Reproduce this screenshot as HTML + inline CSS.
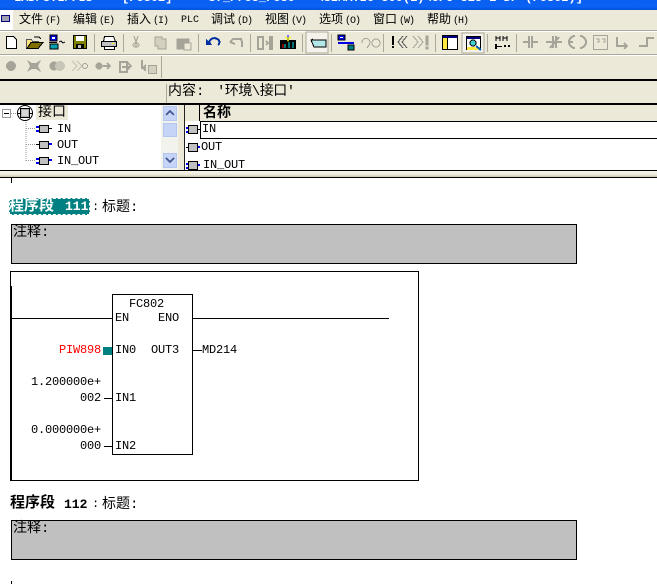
<!DOCTYPE html>
<html><head><meta charset="utf-8">
<style>
html,body{margin:0;padding:0;width:657px;height:584px;overflow:hidden;background:#fff}
#p{position:relative;width:657px;height:584px;overflow:hidden;font:12px/14px "Liberation Mono","WenQuanYi Zen Hei","Noto Sans CJK SC",monospace;color:#000}
.t{position:absolute;white-space:pre;line-height:14px;letter-spacing:-.2px}
.b{position:absolute;box-sizing:border-box}
.bd{font-weight:bold}
.c{font-size:14px;letter-spacing:0}
.n{font-size:13px;font-weight:bold;letter-spacing:0}
.mn{letter-spacing:0;top:13px}
.mn span{font-size:10px;margin-left:2px;letter-spacing:-1px}
svg{position:absolute;left:0;top:0}
</style></head><body><div id="p">
<div class="b" style="left:0;top:0;width:657px;height:10px;background:linear-gradient(#0a5ff0,#0a62f4 70%,#0050d8);overflow:hidden">
<div class="t bd" style="left:14px;top:-9px;color:#fff;letter-spacing:0">LAD/STL/FBD  - [FC802]     S7_Pro3_FC80   \SIMATIC 300(1)\CPU 315-2 DP (FC802)]</div>
</div>
<div class="b" style="left:0;top:10px;width:657px;height:70px;background:#ece9d8"></div>
<div class="b" style="left:0;top:79px;width:657px;height:2px;background:#000"></div>
<div class="b" style="left:0;top:81px;width:657px;height:23px;background:#ece9d8"></div>
<div class="b" style="left:0;top:10px;width:13px;height:20px;background:#fff"></div>
<div class="b" style="left:1px;top:15px;width:9px;height:7px;background:#a0a0b0;border:1px solid #000080"></div>

<div class="t mn" style="left:19px">文件<span>(F)</span></div>
<div class="t mn" style="left:73px">编辑<span>(E)</span></div>
<div class="t mn" style="left:127px">插入<span>(I)</span></div>
<div class="t" style="left:181px;top:14px;font-size:10px;letter-spacing:0">PLC</div>
<div class="t mn" style="left:211px">调试<span>(D)</span></div>
<div class="t mn" style="left:265px">视图<span>(V)</span></div>
<div class="t mn" style="left:319px">选项<span>(O)</span></div>
<div class="t mn" style="left:373px">窗口<span>(W)</span></div>
<div class="t mn" style="left:427px">帮助<span>(H)</span></div>

<div class="b" style="left:0;top:30px;width:657px;height:1px;background:#aca899"></div>
<div class="b" style="left:0;top:31px;width:657px;height:1px;background:#fff"></div>
<div class="b" style="left:0;top:54px;width:657px;height:1px;background:#aca899"></div>
<div class="b" style="left:0;top:55px;width:657px;height:1px;background:#fff"></div>

<svg width="657" height="584" viewBox="0 0 657 584" shape-rendering="crispEdges">
<g fill="#aca899">
<rect x="94" y="34" width="1" height="18"/><rect x="123" y="34" width="1" height="18"/><rect x="198" y="34" width="1" height="18"/><rect x="250" y="34" width="1" height="18"/><rect x="302" y="34" width="1" height="18"/><rect x="331" y="34" width="1" height="18"/><rect x="383" y="34" width="1" height="18"/><rect x="435" y="34" width="1" height="18"/><rect x="487" y="34" width="1" height="18"/><rect x="516" y="34" width="1" height="18"/><rect x="161" y="56" width="1" height="22"/>
</g>
<path d="M6.5 36.5h7l3 3v9h-10z" fill="#fff" stroke="#000"/>
<path d="M26.5 39.5h5l1 2h6v7h-12z" fill="#ffe680" stroke="#555"/><path d="M27 48.5l4-6h12l-5 6z" fill="#807000" stroke="#000"/><path d="M34 37h5l2 2" fill="none" stroke="#000"/>
<rect x="50" y="35" width="7" height="6" fill="#0000e0" stroke="#000"/><rect x="52" y="37" width="3" height="2" fill="#fff"/><rect x="49" y="42" width="8" height="1" fill="#000"/><rect x="50" y="44" width="8" height="5" fill="#00a0b0" stroke="#000"/><path d="M59 42l2-1 2 2 2-1" fill="none" stroke="#000"/>
<rect x="73.500" y="35.500" width="13" height="13" fill="#808000" stroke="#000"/><rect x="76" y="36" width="8" height="5" fill="#fff"/><rect x="76" y="44" width="8" height="5" fill="#000"/><rect x="78" y="45" width="3" height="3" fill="#c0c0c0"/>
<path d="M104.500 36.500h9l2 5h-12z" fill="#fff" stroke="#000"/><rect x="101.500" y="41.500" width="15" height="5" fill="#c0c0c0" stroke="#000"/><rect x="104.500" y="46.500" width="10" height="3" fill="#fff" stroke="#000"/><rect x="112" y="43" width="2" height="1" fill="#ff0"/>
<g fill="#a6a498" stroke="#a6a498">
<path d="M134 36l2 6 2-6M135 43a2 2 0 1 0 .1 0M137 43a2 2 0 1 0 .1 0" fill="none"/>
<path d="M155 37h7v2h4v10h-8v-3h-3z" fill="#d4d0c0"/>
<path d="M177 39h12v10h-12z" fill="#a6a498"/><rect x="184" y="43" width="7" height="7" fill="#ece9d8"/>
<path d="M230 42l3-3h8l1 3v5M230 42l5 2" fill="none" stroke-width="2"/>
<path d="M258 37h5v12h-5zM266 41l2 2-2 2M270 37h2v5h-2zM270 44h2v5h-2z" fill="none" stroke-width="2"/>
<path d="M362 43a4 4 0 1 1 7 2l-2 3M372 43a4 4 0 1 1 0 .1" fill="none"/>
<path d="M413 36l5 6-5 6M418 36l5 6-5 6" fill="none"/><rect x="426" y="36" width="2" height="9"/><rect x="426" y="47" width="2" height="2"/>
<path d="M523 42h5M533 42h5M529 36v12M532 36v12" fill="none" stroke-width="2"/>
<path d="M546 42h6M557 42h5M553 36v12M556 36v12M550 48l9-11" fill="none" stroke-width="2"/>
<path d="M569 42h4M575 36a6 6 0 0 0 0 12M580 36a6 6 0 0 1 0 12" fill="none" stroke-width="2"/>
<rect x="593.500" y="35.500" width="14" height="14" fill="none"/><path d="M596 39h3v3h-2M602 39h3v3h-2" fill="none"/>
<path d="M617 37v9h10M624 43l3 3-3 3" fill="none" stroke-width="2"/>
<path d="M639 46h8v-8h7M647 38" fill="none" stroke-width="2"/>
</g>
<path d="M210 44a5 4 0 1 1 8 1" fill="none" stroke="#0030a0" stroke-width="2"/><path d="M206 39v6h6z" fill="#0030a0"/>
<rect x="280" y="40" width="16" height="9" fill="#000"/><path d="M285 44v4M289 42v6M293 42v6" stroke="#00e0e0"/><path d="M283 44v4" stroke="#f00"/><path d="M288 35v6" stroke="#00f"/><path d="M285 38h6M286 37l2 4 2-4" stroke="#ff0" fill="none"/>
<rect x="306" y="32" width="22" height="21" fill="#f4f2ea" stroke="#aca899"/><path d="M311 40h15v7h-12z" fill="#b4e8e8" stroke="#000"/><path d="M311 40l2-1" stroke="#000"/>
<rect x="338" y="35" width="7" height="5" fill="#0000e0" stroke="#000"/><rect x="340" y="37" width="3" height="1" fill="#fff"/><rect x="338" y="42" width="16" height="2" fill="#0000e0"/><rect x="348" y="45" width="6" height="5" fill="#008080" stroke="#000"/>
<rect x="392" y="36" width="2" height="9" fill="#000"/><rect x="392" y="46" width="2" height="2" fill="#000"/><path d="M403 36l-5 6 5 6M407 36l-5 6 5 6" fill="none" stroke="#555"/>
<rect x="442.500" y="35.500" width="15" height="14" fill="#fff" stroke="#000"/><rect x="443" y="36" width="14" height="2" fill="#000080"/><rect x="443" y="38" width="4" height="11" fill="#ffe840"/><rect x="447" y="38" width="1" height="11" fill="#000"/>
<rect x="462" y="33" width="22" height="20" fill="#f4f2ea" stroke="#aca899"/><rect x="466.500" y="36.500" width="14" height="13" fill="#fff" stroke="#000"/><rect x="467" y="37" width="13" height="2" fill="#000080"/><rect x="467" y="47" width="13" height="3" fill="#ffe840"/><circle cx="473" cy="43" r="3" fill="#40d0d0" stroke="#000"/><path d="M476 46l5 4" stroke="#0060c0" stroke-width="2"/>
<path d="M496 36v5M500 36v5M496 38h4M503 36v5M507 36v5M503 38h4" stroke="#000" fill="none"/><rect x="495" y="44" width="2" height="5" fill="#000"/><rect x="497" y="46" width="5" height="1" fill="#000"/><rect x="504" y="45" width="2" height="2" fill="#000"/><rect x="508" y="45" width="2" height="2" fill="#000"/>
<g fill="#a6a498" stroke="none">
<circle cx="11" cy="66" r="5"/>
<path d="M27 60l5 3h4l5-3-3 6 3 6-5-3h-4l-5 3 3-6z"/>
<circle cx="54" cy="66" r="4.500"/><circle cx="60" cy="66" r="5" fill="#c8c6b8"/>
<path d="M72 61l5 5-5 5M77 61l5 5-5 5" fill="none" stroke="#c4c2b4"/><circle cx="85" cy="66" r="2.500" fill="none" stroke="#a6a498"/>
<circle cx="99" cy="66" r="3.500"/><path d="M103 66h7M107 63l3 3-3 3" fill="none" stroke="#a6a498" stroke-width="2"/>
<path d="M120 62h7v10h-7zM122 67h8M127 62l4 4-4 4" fill="none" stroke="#a6a498" stroke-width="2"/>
<path d="M142 60v8h4M146 65l-3 3 3 3" fill="none" stroke="#a6a498" stroke-width="2"/><rect x="148.500" y="65.500" width="8" height="8" fill="#d4d0c0" stroke="#a6a498"/>
</g>
</svg>

<div class="t c" style="left:168px;top:85px">内容:</div>
<div class="t c" style="left:217px;top:85px;letter-spacing:-.5px">'环境\接口'</div>
<div class="b" style="left:166px;top:84px;width:1px;height:19px;background:#aca899"></div>
<div class="b" style="left:0;top:103px;width:657px;height:2px;background:#000"></div>

<div class="b" style="left:0;top:105px;width:161px;height:65px;background:#fff"></div>
<div class="b" style="left:36px;top:105px;width:32px;height:15px;background:#ece9d8"></div>
<div class="t c" style="left:38px;top:106px">接口</div>
<div class="t" style="left:57px;top:122px">IN</div>
<div class="t" style="left:57px;top:138px">OUT</div>
<div class="t" style="left:57px;top:154px">IN_OUT</div>
<svg width="657" height="584" viewBox="0 0 657 584" shape-rendering="crispEdges">
<rect x="2.500" y="109.500" width="8" height="8" fill="#fff" stroke="#999"/><path d="M4 113.500h5" stroke="#000"/>
<path d="M11 113.500h6M26 120v42M26 128.500h10M26 144.500h10M26 160.500h10" stroke="#999" stroke-dasharray="1 1" fill="none"/>
<circle cx="25" cy="113" r="7.500" fill="none" stroke="#000" shape-rendering="auto"/>
<path d="M17 113.500h3M29 113.500h4" stroke="#000"/>
<rect x="20.500" y="108.500" width="9" height="9" fill="#b0b0b0" stroke="#000"/><rect x="22" y="110" width="6" height="6" fill="#d8d8d8"/>
<rect x="36" y="126" width="3" height="2" fill="#00e"/><rect x="36" y="130" width="3" height="2" fill="#00e"/><rect x="39.500" y="125.500" width="9" height="7" fill="#c0c0c0" stroke="#000"/><path d="M49 128.500h3" stroke="#000"/>
<path d="M36 144.500h3" stroke="#000"/><rect x="39.500" y="141.500" width="9" height="7" fill="#c0c0c0" stroke="#000"/><rect x="49" y="143" width="3" height="2" fill="#00e"/>
<rect x="36" y="158" width="3" height="2" fill="#00e"/><rect x="36" y="162" width="3" height="2" fill="#00e"/><rect x="39.500" y="157.500" width="9" height="7" fill="#c0c0c0" stroke="#000"/><rect x="49" y="159" width="3" height="2" fill="#00e"/>
<rect x="161" y="105" width="17" height="65" fill="#f3f3ee"/>
<rect x="163.500" y="106.500" width="13" height="14" fill="#c6d4f7" stroke="#b4c6ee"/><path d="M166 115l4-4 4 4" fill="none" stroke="#45588f" stroke-width="2"/>
<rect x="163.500" y="123.500" width="13" height="13" fill="#c6d4f7" stroke="#b4c6ee"/>
<rect x="163.500" y="153.500" width="13" height="14" fill="#c6d4f7" stroke="#b4c6ee"/><path d="M166 158l4 4 4-4" fill="none" stroke="#45588f" stroke-width="2"/>
<rect x="178" y="105" width="6" height="65" fill="#ece9d8"/>
<rect x="184" y="105" width="1" height="65" fill="#222"/>
<rect x="185" y="105" width="472" height="65" fill="#fff"/>
<rect x="185" y="105" width="472" height="16" fill="#ece9d8"/>
<rect x="199" y="105" width="1" height="16" fill="#000"/>
<rect x="200" y="121" width="457" height="1" fill="#000"/>
<rect x="200" y="121" width="1" height="18" fill="#000"/>
<rect x="200" y="138" width="457" height="1" fill="#000"/>
<rect x="186" y="127" width="3" height="2" fill="#00e"/><rect x="186" y="131" width="3" height="2" fill="#00e"/><rect x="188.500" y="125.500" width="9" height="8" fill="#c0c0c0" stroke="#000"/><path d="M198 129.500h2" stroke="#000"/>
<path d="M186 147.500h3" stroke="#000"/><rect x="188.500" y="143.500" width="9" height="8" fill="#c0c0c0" stroke="#000"/><rect x="198" y="146" width="2" height="2" fill="#00e"/>
<rect x="186" y="163" width="3" height="2" fill="#00e"/><rect x="186" y="167" width="3" height="2" fill="#00e"/><rect x="188.500" y="161.500" width="9" height="8" fill="#c0c0c0" stroke="#000"/><rect x="198" y="164" width="2" height="2" fill="#00e"/>
</svg>
<div class="t bd c" style="left:203px;top:107px">名称</div>
<div class="t" style="left:202px;top:122px">IN</div>
<div class="t" style="left:201px;top:140px">OUT</div>
<div class="b" style="left:200px;top:158px;width:100px;height:12px;overflow:hidden"><div class="t" style="left:3px;top:0">IN_OUT</div></div>

<div class="b" style="left:0;top:170px;width:657px;height:1px;background:#000"></div>
<div class="b" style="left:0;top:171px;width:657px;height:6px;background:linear-gradient(#f6f4ea,#ece9d8 60%,#c8c4b0)"></div>
<div class="b" style="left:0;top:177px;width:657px;height:1px;background:#000"></div>
<div class="b" style="left:11px;top:178px;width:1px;height:5px;background:#000"></div>

<div class="b" style="left:9px;top:198px;width:81px;height:17px;background:#008080;outline:1px dashed #fff;outline-offset:-1px"></div>
<div class="t bd c" style="left:9px;top:200px;color:#fff;font-size:15px">程序段</div>
<div class="t n" style="left:65px;top:200px;color:#fff">111</div>
<div class="t" style="left:92px;top:200px">:</div>
<div class="t c" style="left:102px;top:201px">标题:</div>
<div class="b" style="left:11px;top:224px;width:566px;height:40px;background:#c0c0c0;border:1px solid #000"></div>
<div class="t c" style="left:13px;top:226px">注释:</div>

<div class="b" style="left:10px;top:271px;width:409px;height:210px;border:1px solid #000"></div>
<div class="b" style="left:10px;top:286px;width:2px;height:195px;background:#000"></div>
<div class="b" style="left:12px;top:318px;width:100px;height:1px;background:#000"></div>
<div class="b" style="left:193px;top:318px;width:196px;height:1px;background:#000"></div>
<div class="b" style="left:112px;top:294px;width:81px;height:161px;border:1px solid #000;background:#fff"></div>
<div class="t" style="left:129px;top:297px">FC802</div>
<div class="t" style="left:115px;top:311px">EN</div>
<div class="t" style="left:158px;top:311px">ENO</div>
<div class="t" style="left:115px;top:343px">IN0</div>
<div class="t" style="left:151px;top:343px">OUT3</div>
<div class="b" style="left:193px;top:350px;width:9px;height:1px;background:#000"></div>
<div class="t" style="left:202px;top:343px">MD214</div>
<div class="t" style="left:59px;top:343px;color:#f00">PIW898</div>
<div class="b" style="left:103px;top:347px;width:9px;height:8px;background:#008080"></div>
<div class="t" style="left:31px;top:375px">1.200000e+</div>
<div class="t" style="left:80px;top:391px">002</div>
<div class="b" style="left:104px;top:398px;width:8px;height:1px;background:#000"></div>
<div class="t" style="left:115px;top:391px">IN1</div>
<div class="t" style="left:31px;top:423px">0.000000e+</div>
<div class="t" style="left:80px;top:439px">000</div>
<div class="b" style="left:104px;top:446px;width:8px;height:1px;background:#000"></div>
<div class="t" style="left:115px;top:439px">IN2</div>

<div class="t bd c" style="left:10px;top:497px;font-size:15px">程序段</div>
<div class="t n" style="left:64px;top:498px">112</div>
<div class="t" style="left:92px;top:497px">:</div>
<div class="t c" style="left:102px;top:498px">标题:</div>
<div class="b" style="left:11px;top:520px;width:566px;height:40px;background:#c0c0c0;border:1px solid #000"></div>
<div class="t c" style="left:13px;top:522px">注释:</div>
<div class="b" style="left:11px;top:581px;width:1px;height:3px;background:#000"></div>
</div></body></html>
